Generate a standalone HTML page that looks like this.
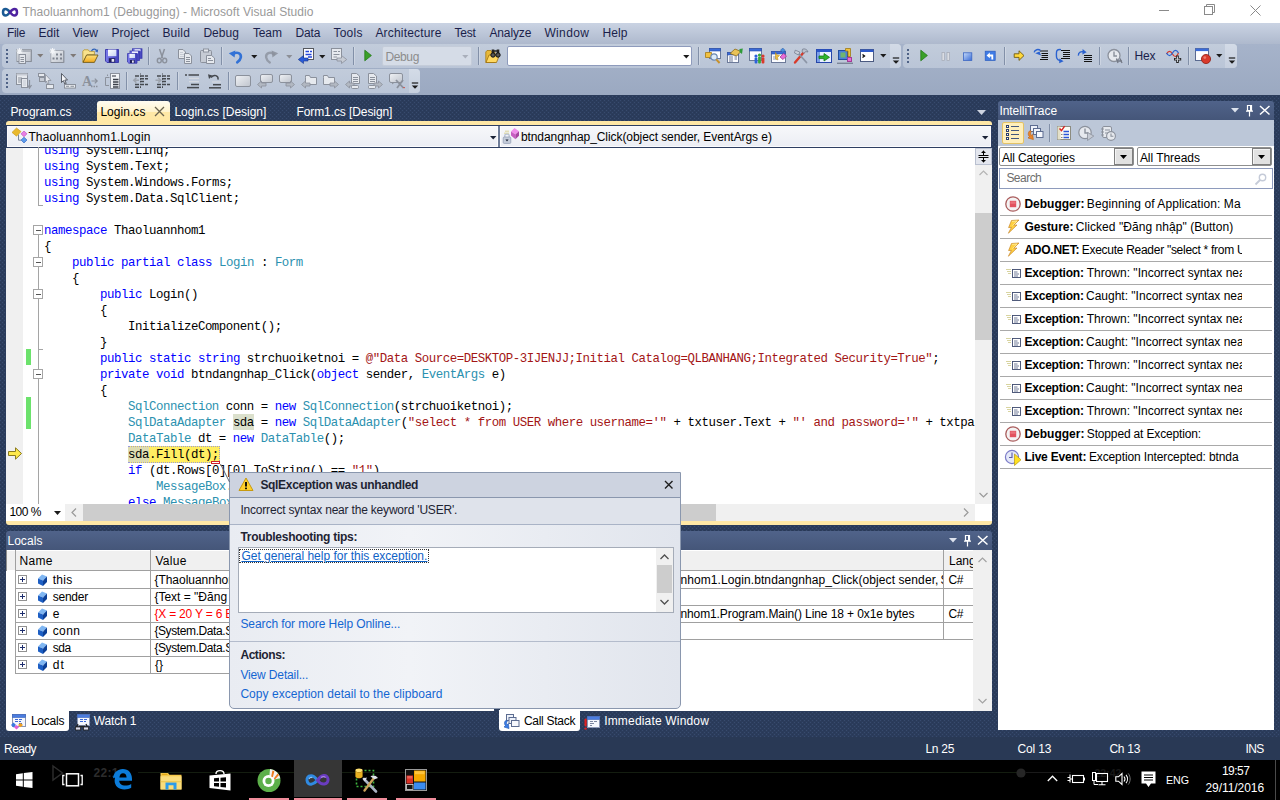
<!DOCTYPE html>
<html><head><meta charset="utf-8"><title>VS</title>
<style>
html,body{margin:0;padding:0;width:1280px;height:800px;overflow:hidden;background:#293955;font-family:"Liberation Sans", sans-serif;font-size:12px}
.t{position:absolute;white-space:pre;display:block}
.r{position:absolute;box-sizing:border-box}
.m{font-family:"Liberation Mono", monospace}
svg{position:absolute;overflow:visible}

.code{position:absolute;left:6px;top:147px;width:969px;height:357px;overflow:hidden;clip-path:inset(1px 0 0 0)}
.cl{position:absolute;left:38px;height:16px;line-height:16px;white-space:pre;font-family:"Liberation Mono",monospace;font-size:12.4px;letter-spacing:-0.441px;color:#000}
.k{color:#0000FF}.ty{color:#2B91AF}.st{color:#A31515}


.dlg{position:absolute;left:229px;top:472px;width:452px;height:237px;box-sizing:border-box;border:1px solid #8A97AE;border-radius:0 0 5px 5px;background:linear-gradient(90deg,#E9ECF2,#F1F3F7 40%,#E1E5ED);overflow:hidden}

</style></head><body>
<svg style="left:0;top:95px" width="1280" height="642"><defs><pattern id="dots" width="4" height="4" patternUnits="userSpaceOnUse"><rect width="4" height="4" fill="#2B3C5B"/><rect x="0" y="1" width="1" height="1" fill="#384B6E"/><rect x="2" y="3" width="1" height="1" fill="#384B6E"/><rect x="2" y="1" width="1" height="1" fill="#283857"/><rect x="0" y="3" width="1" height="1" fill="#283857"/></pattern></defs><rect width="1280" height="642" fill="url(#dots)"/></svg><div class="r" style="left:0px;top:0px;width:1280px;height:23px;background:#fff;"></div><span class="t" style="left:22.4px;top:3.5px;height:16px;line-height:16px;font-size:12px;color:#999;letter-spacing:0.048px;">Thaoluannhom1 (Debugging) - Microsoft Visual Studio</span><div class="r" style="left:0px;top:23px;width:1280px;height:21px;background:linear-gradient(#CAD3E3,#AEB9CD);"></div><span class="t" style="left:6.9px;top:25px;height:16px;line-height:16px;font-size:12px;color:#1B1F4B;letter-spacing:-0.281px;">File</span><span class="t" style="left:38.4px;top:25px;height:16px;line-height:16px;font-size:12px;color:#1B1F4B;letter-spacing:0.104px;">Edit</span><span class="t" style="left:72.4px;top:25px;height:16px;line-height:16px;font-size:12px;color:#1B1F4B;letter-spacing:-0.099px;">View</span><span class="t" style="left:111.4px;top:25px;height:16px;line-height:16px;font-size:12px;color:#1B1F4B;letter-spacing:0.107px;">Project</span><span class="t" style="left:162.4px;top:25px;height:16px;line-height:16px;font-size:12px;color:#1B1F4B;letter-spacing:0.203px;">Build</span><span class="t" style="left:203.4px;top:25px;height:16px;line-height:16px;font-size:12px;color:#1B1F4B;letter-spacing:0.031px;">Debug</span><span class="t" style="left:252.9px;top:25px;height:16px;line-height:16px;font-size:12px;color:#1B1F4B;letter-spacing:-0.115px;">Team</span><span class="t" style="left:295.4px;top:25px;height:16px;line-height:16px;font-size:12px;color:#1B1F4B;letter-spacing:-0.12px;">Data</span><span class="t" style="left:333.4px;top:25px;height:16px;line-height:16px;font-size:12px;color:#1B1F4B;letter-spacing:0.246px;">Tools</span><span class="t" style="left:375.4px;top:25px;height:16px;line-height:16px;font-size:12px;color:#1B1F4B;letter-spacing:0.179px;">Architecture</span><span class="t" style="left:454.4px;top:25px;height:16px;line-height:16px;font-size:12px;color:#1B1F4B;letter-spacing:-0.172px;">Test</span><span class="t" style="left:489.4px;top:25px;height:16px;line-height:16px;font-size:12px;color:#1B1F4B;letter-spacing:-0.117px;">Analyze</span><span class="t" style="left:544.4px;top:25px;height:16px;line-height:16px;font-size:12px;color:#1B1F4B;letter-spacing:0.362px;">Window</span><span class="t" style="left:602.4px;top:25px;height:16px;line-height:16px;font-size:12px;color:#1B1F4B;letter-spacing:0.104px;">Help</span><div class="r" style="left:0px;top:44px;width:1280px;height:51px;background:linear-gradient(#A6B3CA,#9BA9C1);"></div><div class="r" style="left:0px;top:737px;width:1280px;height:23px;background:#293955;"></div><span class="t" style="left:4px;top:740.5px;height:16px;line-height:16px;font-size:12px;color:#fff;letter-spacing:-0.522px;">Ready</span><div class="r" style="left:0px;top:760px;width:1280px;height:40px;background:#000;"></div><span class="t" style="left:10.4px;top:103.5px;height:16px;line-height:16px;font-size:12px;color:#fff;letter-spacing:-0.04px;">Program.cs</span><div class="r" style="left:97px;top:101px;width:73px;height:21px;border-radius:3px 3px 0 0;background:linear-gradient(#FFFCF2,#FFF3CD 50%,#FFE8A6 52%,#FFE8A6)"></div><span class="t" style="left:100.4px;top:103.5px;height:16px;line-height:16px;font-size:12px;color:#000;letter-spacing:0.042px;">Login.cs</span><svg style="left:154px;top:106px" width="11" height="11"><path d="M1 1L10 10M10 1L1 10" stroke="#6b6450" stroke-width="1.3" fill="none"/></svg><span class="t" style="left:174.4px;top:103.5px;height:16px;line-height:16px;font-size:12px;color:#fff;letter-spacing:-0.004px;">Login.cs [Design]</span><span class="t" style="left:296.4px;top:103.5px;height:16px;line-height:16px;font-size:12px;color:#fff;letter-spacing:-0.085px;">Form1.cs [Design]</span><svg style="left:977px;top:110px" width="10" height="6"><path d="M0 0H9L4.5 5Z" fill="#CED4E0"/></svg><div class="r" style="left:6px;top:121px;width:986px;height:403.5px;background:#FFE8A6;border-radius:3px"></div><div class="r" style="left:6px;top:125px;width:986px;height:23px;background:#2E3F62;"></div><div class="r" style="left:7px;top:126px;width:491px;height:21px;background:linear-gradient(#F6F7FA,#ECEEF4);border:1px solid #FBFBFD"></div><div class="r" style="left:498px;top:126px;width:2px;height:21px;background:#6E7C98;"></div><div class="r" style="left:500px;top:126px;width:491px;height:21px;background:linear-gradient(#F6F7FA,#ECEEF4);border:1px solid #FBFBFD"></div><span class="t" style="left:28.4px;top:128.5px;height:16px;line-height:16px;font-size:12px;color:#000;letter-spacing:0.142px;">Thaoluannhom1.Login</span><span class="t" style="left:520.9px;top:128.5px;height:16px;line-height:16px;font-size:12px;color:#000;letter-spacing:-0.072px;">btndangnhap_Click(object sender, EventArgs e)</span><svg style="left:490px;top:136px" width="7" height="4"><path d="M0 0H6.4L3.2 3.6Z" fill="#1A2236"/></svg><svg style="left:982px;top:136px" width="7" height="4"><path d="M0 0H6.4L3.2 3.6Z" fill="#1A2236"/></svg><svg style="left:11px;top:127px" width="18" height="18"><path d="M7.5 7.5V13.2H10" stroke="#7C889C" fill="none"/><path d="M5.5 1L10 4.6L5.5 9.2L1 5.4Z" fill="#E9B92E" stroke="#C4951A" stroke-width=".6"/><path d="M13 4L16 6.8L13 9.8L10 6.8Z" fill="#E87EE4" stroke="#B64FB4" stroke-width=".6"/><path d="M13 10.2L16 13L13 16L10 13Z" fill="#5C9CEC" stroke="#2A5CC0" stroke-width=".6"/></svg><svg style="left:502px;top:127px" width="18" height="18"><path d="M3 4.2H7M2 6.2H7" stroke="#D8D08C" stroke-width=".9"/><path d="M2.8 10V8.4C2.8 6.6 7.2 6.6 7.2 8.4V10" fill="none" stroke="#B8C2D4" stroke-width="1.3"/><rect x="1.2" y="10" width="7.6" height="6.4" rx="1" fill="#C4CCDA" stroke="#8E9AB0" stroke-width=".7"/><path d="M3.4 12.6H6.6L5 14.4Z" fill="#1A2236"/><path d="M12.5 1L17 4.2L13.4 7.4L9 4.4Z" fill="#F08EEA"/><path d="M9 4.4L13.4 7.4V12.2L9 8.6Z" fill="#C85CC2"/><path d="M13.4 7.4L17 4.2V8.8L13.4 12.2Z" fill="#A844A2"/></svg><div class="r" style="left:6px;top:148px;width:969px;height:356px;background:#fff;"></div><div class="r" style="left:6px;top:148px;width:17px;height:356px;background:#F0F0F0;"></div><div class="r" style="left:975px;top:148px;width:17px;height:356px;background:#F0F0F0;"></div><div class="r" style="left:975px;top:148px;width:17px;height:17px;background:#E3E6EE;border:1px solid #B9C0D0"></div><div class="r" style="left:975px;top:213px;width:17px;height:127px;background:#CDCDCD;"></div><div class="r" style="left:6px;top:504px;width:986px;height:17px;background:#F0F0F0;"></div><div class="r" style="left:6px;top:504px;width:59px;height:17px;background:#fff;"></div><span class="t" style="left:9.4px;top:504px;height:16px;line-height:16px;font-size:12px;color:#000;letter-spacing:-0.508px;">100 %</span><svg style="left:54px;top:511px" width="8" height="5"><path d="M0 0H7L3.5 4Z" fill="#1b1b1b"/></svg><div class="r" style="left:83px;top:504px;width:633px;height:17px;background:#CDCDCD;"></div><div class="r" style="left:975px;top:504px;width:17px;height:17px;background:#fff;"></div><div class="code"><div class="r" style="left:20px;top:202px;width:5px;height:16px;background:#6CE26C"></div><div class="r" style="left:20px;top:250px;width:5px;height:32px;background:#6CE26C"></div><div class="r" style="left:227px;top:267px;width:21px;height:16px;background:#DBE0CC"></div><div class="r" style="left:122px;top:299px;width:92px;height:17px;background:#FFEE62;border:1px dotted #9A9AD8"></div><div class="r" style="left:122px;top:300px;width:21px;height:15px;background:#DEDDB2"></div><div class="cl" style="top:-4px"><span class="k">using</span> System.Linq;</div><div class="cl" style="top:12px"><span class="k">using</span> System.Text;</div><div class="cl" style="top:28px"><span class="k">using</span> System.Windows.Forms;</div><div class="cl" style="top:44px"><span class="k">using</span> System.Data.SqlClient;</div><div class="cl" style="top:76px"><span class="k">namespace</span> Thaoluannhom1</div><div class="cl" style="top:92px">{</div><div class="cl" style="top:108px">    <span class="k">public</span> <span class="k">partial</span> <span class="k">class</span> <span class="ty">Login</span> : <span class="ty">Form</span></div><div class="cl" style="top:124px">    {</div><div class="cl" style="top:140px">        <span class="k">public</span> Login()</div><div class="cl" style="top:156px">        {</div><div class="cl" style="top:172px">            InitializeComponent();</div><div class="cl" style="top:188px">        }</div><div class="cl" style="top:204px">        <span class="k">public</span> <span class="k">static</span> <span class="k">string</span> strchuoiketnoi = <span class="st">@&quot;Data Source=DESKTOP-3IJENJJ;Initial Catalog=QLBANHANG;Integrated Security=True&quot;</span>;</div><div class="cl" style="top:220px">        <span class="k">private</span> <span class="k">void</span> btndangnhap_Click(<span class="k">object</span> sender, <span class="ty">EventArgs</span> e)</div><div class="cl" style="top:236px">        {</div><div class="cl" style="top:252px">            <span class="ty">SqlConnection</span> conn = <span class="k">new</span> <span class="ty">SqlConnection</span>(strchuoiketnoi);</div><div class="cl" style="top:268px">            <span class="ty">SqlDataAdapter</span> <span class="ref">sda</span> = <span class="k">new</span> <span class="ty">SqlDataAdapter</span>(<span class="st">&quot;select * from USER where username=&#x27;&quot;</span> + txtuser.Text + <span class="st">&quot;&#x27; and password=&#x27;&quot;</span> + txtpass.Text</div><div class="cl" style="top:284px">            <span class="ty">DataTable</span> dt = <span class="k">new</span> <span class="ty">DataTable</span>();</div><div class="cl" style="top:300px">            <span class="ref2">sda</span><span class="hl">.Fill(dt);</span></div><div class="cl" style="top:316px">            <span class="k">if</span> (dt.Rows[0][0].ToString() == <span class="st">&quot;1&quot;</span>)</div><div class="cl" style="top:332px">                <span class="ty">MessageBox</span>.Show(<span class="st">&quot;Dang nhap thanh cong&quot;</span>);</div><div class="cl" style="top:348px">            <span class="k">else</span> <span class="ty">MessageBox</span>.Show(<span class="st">&quot;Sai&quot;</span>);</div></div><svg style="left:0;top:147px" width="60" height="357" shape-rendering="crispEdges"><path d="M38.5 0V58.5H43" stroke="#A5A5A5" fill="none"/><path d="M38.5 87V357" stroke="#A5A5A5" fill="none"/><path d="M38.5 202.5H43" stroke="#A5A5A5" fill="none"/><rect x="33.5" y="78.5" width="9" height="9" fill="#fff" stroke="#A5A5A5"/><path d="M36 83H41" stroke="#555" fill="none"/><rect x="33.5" y="110.5" width="9" height="9" fill="#fff" stroke="#A5A5A5"/><path d="M36 115H41" stroke="#555" fill="none"/><rect x="33.5" y="142.5" width="9" height="9" fill="#fff" stroke="#A5A5A5"/><path d="M36 147H41" stroke="#555" fill="none"/><rect x="33.5" y="222.5" width="9" height="9" fill="#fff" stroke="#A5A5A5"/><path d="M36 227H41" stroke="#555" fill="none"/></svg><svg style="left:7px;top:446px" width="16" height="15"><path d="M1.5 5.5H8.5V1.8L14.5 7.5L8.5 13.2V9.5H1.5Z" fill="#FFE94A" stroke="#8A7A1E" stroke-width="1"/></svg><svg style="left:211px;top:461px" width="10" height="4"><rect x="0.5" y="0.5" width="8" height="2" fill="#fff" stroke="#D0202A" stroke-width="1"/></svg><div class="r" style="left:998px;top:101px;width:276px;height:19px;background:linear-gradient(#50638A,#455679);border-radius:3px 3px 0 0"></div><span class="t" style="left:999.4px;top:102.5px;height:16px;line-height:16px;font-size:12px;color:#fff;letter-spacing:-0.05px;">IntelliTrace</span><svg style="left:1231px;top:108px" width="9" height="6"><path d="M0 0H8L4 4.5Z" fill="#DDE3EE"/></svg><svg style="left:1245px;top:104px" width="9" height="14"><path d="M2.5 1.5H6.5V6.5H2.5ZM5.6 1.5V6.5M1 7.2H8M4.5 7.2V12.6" stroke="#fff" stroke-width="1.2" fill="none"/></svg><svg style="left:1259px;top:105px" width="12" height="11"><path d="M1 1L10.5 9.5M10.5 1L1 9.5" stroke="#fff" stroke-width="1.5" fill="none"/></svg><div class="r" style="left:998px;top:120px;width:276px;height:26px;background:#BCC7D8;"></div><div class="r" style="left:998px;top:146px;width:276px;height:584px;background:#fff;"></div><div class="r" style="left:999px;top:147px;width:135px;height:19px;background:#fff;border:1px solid #8E8F8F;border-radius:2px"></div><div class="r" style="left:1114px;top:148px;width:19px;height:17px;background:#E1E1E1;border:1px solid #7E7E7E;box-shadow:inset 1px 1px 0 #F4F4F4"></div><svg style="left:1120px;top:155px" width="8" height="5"><path d="M0 0H7L3.5 4Z" fill="#000"/></svg><span class="t" style="left:1001.9px;top:150px;height:16px;line-height:16px;font-size:12px;color:#000;letter-spacing:-0.131px;">All Categories</span><div class="r" style="left:1137px;top:147px;width:135px;height:19px;background:#fff;border:1px solid #8E8F8F;border-radius:2px"></div><div class="r" style="left:1252px;top:148px;width:19px;height:17px;background:#E1E1E1;border:1px solid #7E7E7E;box-shadow:inset 1px 1px 0 #F4F4F4"></div><svg style="left:1258px;top:155px" width="8" height="5"><path d="M0 0H7L3.5 4Z" fill="#000"/></svg><span class="t" style="left:1139.9px;top:150px;height:16px;line-height:16px;font-size:12px;color:#000;letter-spacing:-0.048px;">All Threads</span><div class="r" style="left:999px;top:168px;width:274px;height:21px;background:#fff;border:1px solid #8E9BBC"></div><span class="t" style="left:1006.4px;top:169.7px;height:16px;line-height:16px;font-size:12px;color:#6d6d6d;letter-spacing:-0.526px;">Search</span><svg style="left:1254px;top:172px" width="14" height="14"><circle cx="8.5" cy="5.5" r="3.2" fill="none" stroke="#C5CBD8" stroke-width="1.4"/><path d="M6 8L1.5 12.5" stroke="#C5CBD8" stroke-width="1.8"/></svg><div class="r" style="left:998px;top:190px;width:244px;height:290px;overflow:hidden"><span class="t" style="left:26.4px;top:6px;height:16px;line-height:16px;font-size:12px;color:#000;font-weight:700;letter-spacing:0px;">Debugger:</span><span class="t" style="left:88.8px;top:6px;height:16px;line-height:16px;font-size:12px;color:#000;letter-spacing:0.088px;">Beginning of Application: Ma</span><span class="t" style="left:26.4px;top:29px;height:16px;line-height:16px;font-size:12px;color:#000;font-weight:700;letter-spacing:-0.051px;">Gesture:</span><span class="t" style="left:77.8px;top:29px;height:16px;line-height:16px;font-size:12px;color:#000;letter-spacing:0.054px;">Clicked &quot;Đăng nhập&quot; (Button)</span><span class="t" style="left:26.4px;top:52px;height:16px;line-height:16px;font-size:12px;color:#000;font-weight:700;letter-spacing:-0.239px;">ADO.NET:</span><span class="t" style="left:83.7px;top:52px;height:16px;line-height:16px;font-size:12px;color:#000;letter-spacing:-0.278px;">Execute Reader &quot;select * from U</span><span class="t" style="left:26.4px;top:75px;height:16px;line-height:16px;font-size:12px;color:#000;font-weight:700;letter-spacing:-0.205px;">Exception:</span><span class="t" style="left:88.7px;top:75px;height:16px;line-height:16px;font-size:12px;color:#000;letter-spacing:0px;">Thrown: &quot;Incorrect syntax nea</span><span class="t" style="left:26.4px;top:98px;height:16px;line-height:16px;font-size:12px;color:#000;font-weight:700;letter-spacing:-0.205px;">Exception:</span><span class="t" style="left:88px;top:98px;height:16px;line-height:16px;font-size:12px;color:#000;letter-spacing:0px;">Caught: &quot;Incorrect syntax nea</span><span class="t" style="left:26.4px;top:121px;height:16px;line-height:16px;font-size:12px;color:#000;font-weight:700;letter-spacing:-0.205px;">Exception:</span><span class="t" style="left:88.7px;top:121px;height:16px;line-height:16px;font-size:12px;color:#000;letter-spacing:0px;">Thrown: &quot;Incorrect syntax nea</span><span class="t" style="left:26.4px;top:144px;height:16px;line-height:16px;font-size:12px;color:#000;font-weight:700;letter-spacing:-0.205px;">Exception:</span><span class="t" style="left:88px;top:144px;height:16px;line-height:16px;font-size:12px;color:#000;letter-spacing:0px;">Caught: &quot;Incorrect syntax nea</span><span class="t" style="left:26.4px;top:167px;height:16px;line-height:16px;font-size:12px;color:#000;font-weight:700;letter-spacing:-0.205px;">Exception:</span><span class="t" style="left:88.7px;top:167px;height:16px;line-height:16px;font-size:12px;color:#000;letter-spacing:0px;">Thrown: &quot;Incorrect syntax nea</span><span class="t" style="left:26.4px;top:190px;height:16px;line-height:16px;font-size:12px;color:#000;font-weight:700;letter-spacing:-0.205px;">Exception:</span><span class="t" style="left:88px;top:190px;height:16px;line-height:16px;font-size:12px;color:#000;letter-spacing:0px;">Caught: &quot;Incorrect syntax nea</span><span class="t" style="left:26.4px;top:213px;height:16px;line-height:16px;font-size:12px;color:#000;font-weight:700;letter-spacing:-0.205px;">Exception:</span><span class="t" style="left:88.7px;top:213px;height:16px;line-height:16px;font-size:12px;color:#000;letter-spacing:0px;">Thrown: &quot;Incorrect syntax nea</span><span class="t" style="left:26.4px;top:236px;height:16px;line-height:16px;font-size:12px;color:#000;font-weight:700;letter-spacing:0px;">Debugger:</span><span class="t" style="left:88.8px;top:236px;height:16px;line-height:16px;font-size:12px;color:#000;letter-spacing:-0.156px;">Stopped at Exception:</span><span class="t" style="left:26.4px;top:259px;height:16px;line-height:16px;font-size:12px;color:#000;font-weight:700;letter-spacing:-0.203px;">Live Event:</span><span class="t" style="left:90.9px;top:259px;height:16px;line-height:16px;font-size:12px;color:#000;letter-spacing:-0.114px;">Exception Intercepted: btnda</span></div><div class="r" style="left:1000px;top:215px;width:272px;height:1px;background:#A9A9A9;"></div><div class="r" style="left:1000px;top:238px;width:272px;height:1px;background:#A9A9A9;"></div><div class="r" style="left:1000px;top:261px;width:272px;height:1px;background:#A9A9A9;"></div><div class="r" style="left:1000px;top:284px;width:272px;height:1px;background:#A9A9A9;"></div><div class="r" style="left:1000px;top:307px;width:272px;height:1px;background:#A9A9A9;"></div><div class="r" style="left:1000px;top:330px;width:272px;height:1px;background:#A9A9A9;"></div><div class="r" style="left:1000px;top:353px;width:272px;height:1px;background:#A9A9A9;"></div><div class="r" style="left:1000px;top:376px;width:272px;height:1px;background:#A9A9A9;"></div><div class="r" style="left:1000px;top:399px;width:272px;height:1px;background:#A9A9A9;"></div><div class="r" style="left:1000px;top:422px;width:272px;height:1px;background:#A9A9A9;"></div><div class="r" style="left:1000px;top:445px;width:272px;height:1px;background:#A9A9A9;"></div><div class="r" style="left:1000px;top:468px;width:272px;height:1px;background:#A9A9A9;"></div><div class="r" style="left:6px;top:531px;width:488px;height:19px;background:linear-gradient(#50638A,#455679);border-radius:3px 3px 0 0"></div><span class="t" style="left:7.4px;top:532.5px;height:16px;line-height:16px;font-size:12px;color:#fff;letter-spacing:0.062px;">Locals</span><div class="r" style="left:6px;top:550px;width:488px;height:161px;background:#fff;"></div><div class="r" style="left:6px;top:551px;width:488px;height:19px;background:#F0F0F0;"></div><div class="r" style="left:6px;top:550px;width:1px;height:21px;background:#8E8E8E;"></div><span class="t" style="left:19.4px;top:552.5px;height:16px;line-height:16px;font-size:12px;color:#000;letter-spacing:0.328px;">Name</span><span class="t" style="left:155.4px;top:552.5px;height:16px;line-height:16px;font-size:12px;color:#000;letter-spacing:0.297px;">Value</span><div class="r" style="left:15px;top:570px;width:479px;height:1px;background:#A0A0A0;"></div><div class="r" style="left:15px;top:588px;width:479px;height:1px;background:#A0A0A0;"></div><div class="r" style="left:15px;top:605px;width:479px;height:1px;background:#A0A0A0;"></div><div class="r" style="left:15px;top:622px;width:479px;height:1px;background:#A0A0A0;"></div><div class="r" style="left:15px;top:639px;width:479px;height:1px;background:#A0A0A0;"></div><div class="r" style="left:15px;top:656px;width:479px;height:1px;background:#A0A0A0;"></div><div class="r" style="left:15px;top:673px;width:479px;height:1px;background:#A0A0A0;"></div><div class="r" style="left:15px;top:550px;width:1px;height:124px;background:#A0A0A0;"></div><div class="r" style="left:150px;top:550px;width:1px;height:124px;background:#A0A0A0;"></div><svg style="left:18px;top:574.5px" width="9" height="9" shape-rendering="crispEdges"><rect x="0.5" y="0.5" width="8" height="8" fill="#fff" stroke="#919191"/><path d="M2 4.5H7M4.5 2V7" stroke="#1E2E6E" fill="none"/></svg><svg style="left:37px;top:573.5px" width="11" height="13"><path d="M5 0.5L10 2.5L6 6.5L1 4.5Z" fill="#7FB6F2"/><path d="M1 4.5L6 6.5V12L1 9.5Z" fill="#1D5FC4"/><path d="M6 6.5L10 2.5V8L6 12Z" fill="#0B3F96"/></svg><span class="t" style="left:52.7px;top:571.5px;height:16px;line-height:16px;font-size:12px;color:#000;letter-spacing:0.304px;">this</span><span class="t" style="left:154.4px;top:571.5px;height:16px;line-height:16px;font-size:12px;color:#000;letter-spacing:-0.019px;">{Thaoluannhom1.Login, Text: Đăng nhập}</span><svg style="left:18px;top:591.5px" width="9" height="9" shape-rendering="crispEdges"><rect x="0.5" y="0.5" width="8" height="8" fill="#fff" stroke="#919191"/><path d="M2 4.5H7M4.5 2V7" stroke="#1E2E6E" fill="none"/></svg><svg style="left:37px;top:590.5px" width="11" height="13"><path d="M5 0.5L10 2.5L6 6.5L1 4.5Z" fill="#7FB6F2"/><path d="M1 4.5L6 6.5V12L1 9.5Z" fill="#1D5FC4"/><path d="M6 6.5L10 2.5V8L6 12Z" fill="#0B3F96"/></svg><span class="t" style="left:52.7px;top:588.5px;height:16px;line-height:16px;font-size:12px;color:#000;letter-spacing:-0.221px;">sender</span><span class="t" style="left:154.4px;top:588.5px;height:16px;line-height:16px;font-size:12px;color:#000;letter-spacing:0.003px;">{Text = &quot;Đăng nhập&quot;}</span><svg style="left:18px;top:608.5px" width="9" height="9" shape-rendering="crispEdges"><rect x="0.5" y="0.5" width="8" height="8" fill="#fff" stroke="#919191"/><path d="M2 4.5H7M4.5 2V7" stroke="#1E2E6E" fill="none"/></svg><svg style="left:37px;top:607.5px" width="11" height="13"><path d="M5 0.5L10 2.5L6 6.5L1 4.5Z" fill="#7FB6F2"/><path d="M1 4.5L6 6.5V12L1 9.5Z" fill="#1D5FC4"/><path d="M6 6.5L10 2.5V8L6 12Z" fill="#0B3F96"/></svg><span class="t" style="left:52.7px;top:605.5px;height:16px;line-height:16px;font-size:12px;color:#000;letter-spacing:0px;">e</span><span class="t" style="left:154.4px;top:605.5px;height:16px;line-height:16px;font-size:12px;color:#FF0000;letter-spacing:-0.193px;">{X = 20 Y = 6 Button = Left}</span><svg style="left:18px;top:625.5px" width="9" height="9" shape-rendering="crispEdges"><rect x="0.5" y="0.5" width="8" height="8" fill="#fff" stroke="#919191"/><path d="M2 4.5H7M4.5 2V7" stroke="#1E2E6E" fill="none"/></svg><svg style="left:37px;top:624.5px" width="11" height="13"><path d="M5 0.5L10 2.5L6 6.5L1 4.5Z" fill="#7FB6F2"/><path d="M1 4.5L6 6.5V12L1 9.5Z" fill="#1D5FC4"/><path d="M6 6.5L10 2.5V8L6 12Z" fill="#0B3F96"/></svg><span class="t" style="left:52.7px;top:622.5px;height:16px;line-height:16px;font-size:12px;color:#000;letter-spacing:0.39px;">conn</span><span class="t" style="left:154.4px;top:622.5px;height:16px;line-height:16px;font-size:12px;color:#000;letter-spacing:-0.396px;">{System.Data.SqlClient.SqlConnection}</span><svg style="left:18px;top:642.5px" width="9" height="9" shape-rendering="crispEdges"><rect x="0.5" y="0.5" width="8" height="8" fill="#fff" stroke="#919191"/><path d="M2 4.5H7M4.5 2V7" stroke="#1E2E6E" fill="none"/></svg><svg style="left:37px;top:641.5px" width="11" height="13"><path d="M5 0.5L10 2.5L6 6.5L1 4.5Z" fill="#7FB6F2"/><path d="M1 4.5L6 6.5V12L1 9.5Z" fill="#1D5FC4"/><path d="M6 6.5L10 2.5V8L6 12Z" fill="#0B3F96"/></svg><span class="t" style="left:52.7px;top:639.5px;height:16px;line-height:16px;font-size:12px;color:#000;letter-spacing:-0.38px;">sda</span><span class="t" style="left:154.4px;top:639.5px;height:16px;line-height:16px;font-size:12px;color:#000;letter-spacing:-0.398px;">{System.Data.SqlClient.SqlDataAdapter}</span><svg style="left:18px;top:659.5px" width="9" height="9" shape-rendering="crispEdges"><rect x="0.5" y="0.5" width="8" height="8" fill="#fff" stroke="#919191"/><path d="M2 4.5H7M4.5 2V7" stroke="#1E2E6E" fill="none"/></svg><svg style="left:37px;top:658.5px" width="11" height="13"><path d="M5 0.5L10 2.5L6 6.5L1 4.5Z" fill="#7FB6F2"/><path d="M1 4.5L6 6.5V12L1 9.5Z" fill="#1D5FC4"/><path d="M6 6.5L10 2.5V8L6 12Z" fill="#0B3F96"/></svg><span class="t" style="left:52.7px;top:656.5px;height:16px;line-height:16px;font-size:12px;color:#000;letter-spacing:1.184px;">dt</span><span class="t" style="left:155px;top:656.5px;height:16px;line-height:16px;font-size:12px;color:#000;letter-spacing:0px;">{}</span><div class="r" style="left:500px;top:531px;width:492px;height:19px;background:linear-gradient(#50638A,#455679);border-radius:3px 3px 0 0"></div><span class="t" style="left:501.4px;top:532.5px;height:16px;line-height:16px;font-size:12px;color:#fff;letter-spacing:0.108px;">Call Stack</span><svg style="left:949px;top:538px" width="9" height="6"><path d="M0 0H8L4 4.5Z" fill="#DDE3EE"/></svg><svg style="left:963px;top:534px" width="9" height="14"><path d="M2.5 1.5H6.5V6.5H2.5ZM5.6 1.5V6.5M1 7.2H8M4.5 7.2V12.6" stroke="#fff" stroke-width="1.2" fill="none"/></svg><svg style="left:977px;top:535px" width="12" height="11"><path d="M1 1L10.5 9.5M10.5 1L1 9.5" stroke="#fff" stroke-width="1.5" fill="none"/></svg><div class="r" style="left:500px;top:550px;width:492px;height:161px;background:#fff;"></div><div class="r" style="left:500px;top:551px;width:473px;height:19px;background:#F0F0F0;"></div><div class="r" style="left:973px;top:550px;width:19px;height:161px;background:#F0F0F0;"></div><div class="r" style="left:500px;top:570px;width:473px;height:1px;background:#A0A0A0;"></div><div class="r" style="left:500px;top:588px;width:473px;height:1px;background:#A0A0A0;"></div><div class="r" style="left:500px;top:605px;width:473px;height:1px;background:#A0A0A0;"></div><div class="r" style="left:500px;top:622px;width:473px;height:1px;background:#A0A0A0;"></div><div class="r" style="left:500px;top:639px;width:473px;height:1px;background:#A0A0A0;"></div><div class="r" style="left:943px;top:550px;width:1px;height:90px;background:#A0A0A0;"></div><span class="t" style="left:949px;top:552.5px;height:16px;line-height:16px;font-size:12px;color:#000;letter-spacing:0px;">Lang</span><div class="r" style="left:973px;top:550px;width:19px;height:22px;background:#F0F0F0;"></div><div class="r" style="left:500px;top:571px;width:443px;height:60px;overflow:hidden"><span class="t" style="left:180.4px;top:0.5px;height:16px;line-height:16px;font-size:12px;color:#000;letter-spacing:0.089px;">nhom1.Login.btndangnhap_Click(object sender,</span><span class="t" style="left:440.6px;top:0.5px;height:16px;line-height:16px;font-size:12px;color:#000;letter-spacing:0px;">System.EventArgs e) Line 25</span><span class="t" style="left:180.4px;top:34.5px;height:16px;line-height:16px;font-size:12px;color:#000;letter-spacing:-0.095px;">nhom1.Program.Main() Line 18 + 0x1e bytes</span></div><span class="t" style="left:948.4px;top:571.5px;height:16px;line-height:16px;font-size:12px;color:#000;letter-spacing:-0.344px;">C#</span><span class="t" style="left:948.4px;top:605.5px;height:16px;line-height:16px;font-size:12px;color:#000;letter-spacing:-0.344px;">C#</span><svg style="left:978px;top:557px" width="9" height="6"><path d="M0.5 5L4.5 1L8.5 5" stroke="#A3A3A3" stroke-width="1.2" fill="none"/></svg><svg style="left:978px;top:698px" width="9" height="6"><path d="M0.5 1L4.5 5L8.5 1" stroke="#A3A3A3" stroke-width="1.2" fill="none"/></svg><div class="r" style="left:6px;top:710px;width:63px;height:21px;background:#fff;border-radius:0 0 3px 3px"></div><span class="t" style="left:30.9px;top:713.4px;height:16px;line-height:16px;font-size:12px;color:#000;letter-spacing:-0.237px;">Locals</span><span class="t" style="left:93.8px;top:713.4px;height:16px;line-height:16px;font-size:12px;color:#fff;letter-spacing:-0.163px;">Watch 1</span><div class="r" style="left:499px;top:710px;width:81px;height:21px;background:#fff;border-radius:0 0 3px 3px"></div><span class="t" style="left:523.9px;top:713.4px;height:16px;line-height:16px;font-size:12px;color:#000;letter-spacing:-0.281px;">Call Stack</span><span class="t" style="left:604.2px;top:713.4px;height:16px;line-height:16px;font-size:12px;color:#fff;letter-spacing:0.177px;">Immediate Window</span><span class="t" style="left:925.4px;top:740.5px;height:16px;line-height:16px;font-size:12px;color:#fff;letter-spacing:-0.258px;">Ln 25</span><span class="t" style="left:1017.4px;top:740.5px;height:16px;line-height:16px;font-size:12px;color:#fff;letter-spacing:-0.138px;">Col 13</span><span class="t" style="left:1109.4px;top:740.5px;height:16px;line-height:16px;font-size:12px;color:#fff;letter-spacing:-0.258px;">Ch 13</span><span class="t" style="left:1245.4px;top:740.5px;height:16px;line-height:16px;font-size:12px;color:#fff;letter-spacing:-0.508px;">INS</span><div class="dlg"><div class="r" style="left:0px;top:0px;width:450px;height:24px;background:#CDD3E0;"></div><div class="r" style="left:0px;top:24px;width:450px;height:1px;background:#8A97AE;"></div><div class="r" style="left:0px;top:25px;width:450px;height:26px;background:#DFE3EB;"></div><div class="r" style="left:0px;top:51px;width:450px;height:1px;background:#A9B3C6;"></div><div class="r" style="left:0px;top:168px;width:450px;height:1px;background:#B4BCCC;"></div><div class="r" style="left:8px;top:74px;width:436px;height:66px;background:#fff;border:1px solid #A5ACB8"></div><div class="r" style="left:426px;top:75px;width:17px;height:64px;background:#F0F0F0;"></div><div class="r" style="left:427px;top:92px;width:15px;height:28px;background:#CDCDCD;"></div><svg style="left:430px;top:81px" width="9" height="6"><path d="M0.5 5L4.5 1L8.5 5" stroke="#505050" stroke-width="1.3" fill="none"/></svg><svg style="left:430px;top:126px" width="9" height="6"><path d="M0.5 1L4.5 5L8.5 1" stroke="#505050" stroke-width="1.3" fill="none"/></svg></div><span class="t" style="left:260.4px;top:476.5px;height:16px;line-height:16px;font-size:12px;color:#1E2433;font-weight:700;letter-spacing:-0.321px;">SqlException was unhandled</span><span class="t" style="left:240.4px;top:501.5px;height:16px;line-height:16px;font-size:12px;color:#1E2433;letter-spacing:-0.192px;">Incorrect syntax near the keyword &#x27;USER&#x27;.</span><span class="t" style="left:240.4px;top:528.5px;height:16px;line-height:16px;font-size:12px;color:#1E2433;font-weight:700;letter-spacing:-0.283px;">Troubleshooting tips:</span><span class="t" style="left:241.4px;top:547.5px;height:16px;line-height:16px;font-size:12px;color:#0E62C6;letter-spacing:-0.004px;text-decoration:underline">Get general help for this exception.</span><div class="r" style="left:239px;top:549px;width:190px;height:14px;background:transparent;border:1px dotted #333"></div><span class="t" style="left:240.4px;top:615.5px;height:16px;line-height:16px;font-size:12px;color:#1466D2;letter-spacing:-0.072px;">Search for more Help Online...</span><span class="t" style="left:240.4px;top:646.5px;height:16px;line-height:16px;font-size:12px;color:#1E2433;font-weight:700;letter-spacing:-0.429px;">Actions:</span><span class="t" style="left:240.4px;top:666.5px;height:16px;line-height:16px;font-size:12px;color:#1466D2;letter-spacing:-0.139px;">View Detail...</span><span class="t" style="left:240.4px;top:685.5px;height:16px;line-height:16px;font-size:12px;color:#1466D2;letter-spacing:0.05px;">Copy exception detail to the clipboard</span><svg style="left:664px;top:480px" width="10" height="10"><path d="M1 1L8.5 8.5M8.5 1L1 8.5" stroke="#1E1E1E" stroke-width="1.4" fill="none"/></svg><svg style="left:238px;top:477px" width="16" height="15"><path d="M8 1L15 13.5H1Z" fill="#FFD02A" stroke="#C79A10" stroke-width="1" stroke-linejoin="round"/><path d="M8 5V9.5" stroke="#000" stroke-width="1.8"/><rect x="7.1" y="10.6" width="1.8" height="1.6" fill="#000"/></svg><svg style="left:218px;top:462px" width="14" height="22"><path d="M2.5 2L11.5 20" stroke="#5A6478" stroke-width="1" fill="none"/></svg><svg width="0" height="0" style="left:0;top:0"><defs><linearGradient id="gG" x1="0" y1="0" x2="1" y2="1"><stop offset="0" stop-color="#F0F2F5"/><stop offset="1" stop-color="#BFC4CD"/></linearGradient><linearGradient id="gF" x1="0" y1="0" x2="0" y2="1"><stop offset="0" stop-color="#FFE27A"/><stop offset="1" stop-color="#F0A81E"/></linearGradient><linearGradient id="gB" x1="0" y1="0" x2="1" y2="0"><stop offset="0" stop-color="#7C7CEA"/><stop offset="1" stop-color="#4242BC"/></linearGradient><linearGradient id="gS" x1="0" y1="0" x2="1" y2="1"><stop offset="0" stop-color="#C8DCFA"/><stop offset="1" stop-color="#3A6CD6"/></linearGradient><linearGradient id="gW" x1="0" y1="0" x2="1" y2="1"><stop offset="0" stop-color="#FFFFFF"/><stop offset="1" stop-color="#C8D4F4"/></linearGradient></defs></svg><div class="r" style="left:2px;top:44px;width:899px;height:24px;border-radius:4px;background:linear-gradient(#C2CCDB,#BAC5D7)"></div><div class="r" style="left:890px;top:44px;width:11px;height:24px;border-radius:0 4px 4px 0;background:linear-gradient(#D3DBE7,#C6CFDE)"></div><div class="r" style="left:6px;top:49px;width:2px;height:2px;background:#4F6286;"></div><div class="r" style="left:6px;top:53px;width:2px;height:2px;background:#4F6286;"></div><div class="r" style="left:6px;top:57px;width:2px;height:2px;background:#4F6286;"></div><div class="r" style="left:6px;top:61px;width:2px;height:2px;background:#4F6286;"></div><svg style="left:16px;top:48px" width="16" height="16"><rect x="0.8" y="1.5" width="14.5" height="12" fill="url(#gG)" stroke="#9AA0AA"/><rect x="1.3" y="2" width="13.5" height="2" fill="#AEB3BC"/><path d="M15.3 2V13.5H1" stroke="#888E99" fill="none"/><rect x="3" y="6.5" width="6.5" height="9" fill="#E4E7EC" stroke="#8A909B"/><path d="M4.5 9.5H8M4.5 11.5H8M4.5 13.5H8" stroke="#8A909B"/><path d="M3.5 0V6M0.5 3H6.5M1.3 0.8L5.7 5.2M5.7 0.8L1.3 5.2" stroke="#F3F5F8" stroke-width="1.1"/></svg><svg style="left:49px;top:48px" width="16" height="16"><rect x="1.8" y="2.5" width="13" height="12" fill="url(#gG)" stroke="#A6ABB5"/><path d="M14.8 3V14.5H2" stroke="#888E99" fill="none"/><path d="M7 6.5H9M11 6.5H13M3.5 10.5H5.5M7 10.5H9M11 10.5H13" stroke="#7E848F" stroke-width="2"/><path d="M3.5 0V6M0.5 3H6.5M1.3 0.8L5.7 5.2M5.7 0.8L1.3 5.2" stroke="#F3F5F8" stroke-width="1.1"/></svg><svg style="left:82px;top:48px" width="16" height="16"><path d="M0.8 14.2V3.2L2 1.8H6.2L7.4 3.4H12.4V6.8H5L0.8 14.2Z" fill="#F8E28C" stroke="#B8962E" stroke-width=".8"/><path d="M1 14.4L4.6 7H16L12.4 14.4Z" fill="url(#gF)" stroke="#6E5A1E" stroke-width=".9"/><path d="M9.5 3C10.6 0.6 13.6 0.6 14.8 2.6" fill="none" stroke="#2F62B8" stroke-width="1.1"/><path d="M16.2 1.2L15.6 4.6L12.8 3Z" fill="#2F62B8"/></svg><svg style="left:104px;top:48px" width="16" height="16"><path d="M1.5 1.5H14.5V14.5H3L1.5 13Z" fill="url(#gB)" stroke="#3636A8" stroke-width=".9"/><rect x="4" y="1.6" width="8.4" height="6.6" fill="url(#gW)"/><rect x="4.8" y="10.2" width="6.4" height="4.2" fill="#20205A"/><rect x="7.6" y="11" width="2.6" height="2.8" fill="#E8E8F4"/></svg><svg style="left:127px;top:48px" width="16" height="16"><rect x="5.5" y="0.8" width="9.5" height="9.5" fill="url(#gB)" stroke="#3A3AAC" stroke-width=".8"/><rect x="7.5" y="1.2" width="6" height="2" fill="#EEF0FF"/><rect x="3" y="3" width="9.5" height="9.5" fill="url(#gB)" stroke="#3A3AAC" stroke-width=".8"/><rect x="5" y="3.4" width="6" height="2" fill="#EEF0FF"/><path d="M0.5 5.5H10V15.2H1.8L0.5 14Z" fill="url(#gB)" stroke="#3A3AAC" stroke-width=".8"/><rect x="2.4" y="5.8" width="5.6" height="4.2" fill="url(#gW)"/><rect x="3" y="12" width="4.6" height="3" fill="#20205A"/><rect x="5" y="12.5" width="1.8" height="2.2" fill="#E8E8F4"/></svg><svg style="left:154px;top:48px" width="16" height="16"><path d="M5.5 1L8.6 10M10.5 1L7.4 10" stroke="#8B919C" stroke-width="1.5" fill="none"/><ellipse cx="5.3" cy="12.6" rx="2" ry="2.3" fill="none" stroke="#8B919C" stroke-width="1.4"/><ellipse cx="10.7" cy="12.6" rx="2" ry="2.3" fill="none" stroke="#8B919C" stroke-width="1.4"/></svg><svg style="left:177px;top:48px" width="16" height="16"><path d="M1.5 1.5H6L8.5 4V10.5H1.5Z" fill="#E6E9EE" stroke="#8B919C"/><path d="M3 4.5H6M3 6.5H7M3 8.5H7" stroke="#C6CBD4"/><path d="M7.5 5.5H12L14.5 8V15.5H7.5Z" fill="#E6E9EE" stroke="#8B919C"/><path d="M9 9.5H13M9 11.5H13M9 13.5H13" stroke="#8B919C"/></svg><svg style="left:199px;top:48px" width="16" height="16"><rect x="1.5" y="2.5" width="11" height="12" rx="1" fill="#C6CBD4" stroke="#8B919C"/><rect x="4.5" y="1" width="5" height="3" fill="#E6E9EE" stroke="#8B919C"/><path d="M7.5 7.5H12.5L15.5 10V15.5H7.5Z" fill="#E6E9EE" stroke="#8B919C"/><path d="M9 10.5H12M9 12.5H14" stroke="#8B919C"/></svg><svg style="left:228px;top:48px" width="16" height="16"><path d="M5 6.2C9 3.2 13.6 5.2 12.8 9.6C12.4 11.8 10.8 13.4 9.2 14.4" fill="none" stroke="#3272D6" stroke-width="2.6" stroke-linecap="round"/><path d="M0.8 5.2L7.4 2.4L6.6 9.6Z" fill="#3272D6"/></svg><svg style="left:263px;top:48px" width="16" height="16"><path d="M11 6.2C7 3.2 2.4 5.2 3.2 9.6C3.6 11.8 5.2 13.4 6.8 14.4" fill="none" stroke="#8B919C" stroke-width="2.4" stroke-linecap="round" opacity=".8"/><path d="M15.2 5.2L8.6 2.4L9.4 9.6Z" fill="#8B919C" opacity=".85"/></svg><svg style="left:298px;top:48px" width="16" height="16"><rect x="5.5" y="0.5" width="10" height="11" fill="#FCFCFF" stroke="#55585E"/><path d="M7.5 3.5H11M12 3.5H14M7.5 6.5H13.5M10 9H14" stroke="#2346D8" stroke-width="1.3"/><path d="M0.3 11.5L5.5 7.5V10H10V13H5.5V15.5Z" fill="#2A5BD8" stroke="#17388E" stroke-width=".6"/></svg><svg style="left:331px;top:48px" width="16" height="16"><rect x="0.5" y="0.5" width="10" height="11" fill="#E6E9EE" stroke="#8B919C"/><path d="M2.5 3.5H6M7 3.5H9M2.5 6.5H8.5M2.5 9H6" stroke="#8B919C" stroke-width="1.1"/><path d="M15.7 11.5L10.5 7.5V10H6V13H10.5V15.5Z" fill="#C6CBD4" stroke="#8B919C" stroke-width=".8"/></svg><svg style="left:360px;top:48px" width="16" height="16"><path d="M4.8 2.2L11.4 7.5L4.8 12.8Z" fill="#3AA028" stroke="#237A16" stroke-width=".8"/></svg><svg style="left:485px;top:48px" width="16" height="16"><path d="M0.8 14.5V4L2 2.5H6L7 4H10V14.5Z" fill="#E8B93A" stroke="#A67A12" stroke-width=".8"/><path d="M1 14.5L4 7H14.5L11.5 14.5Z" fill="#FFD861" stroke="#9C6F0C" stroke-width=".8"/><path d="M8 1.5V6M13 1.5V6" stroke="#222" stroke-width="2.6"/><circle cx="8" cy="7" r="2.2" fill="#555" stroke="#111"/><circle cx="13" cy="7" r="2.2" fill="#555" stroke="#111"/><path d="M9 3H12" stroke="#222" stroke-width="1.5"/></svg><svg style="left:705px;top:48px" width="16" height="16"><rect x="4.5" y="0.5" width="11" height="10" fill="#FBFCFF" stroke="#6C7A99"/><rect x="4.5" y="0.5" width="11" height="2.5" fill="#3A6BD8" stroke="#2A4FA8" stroke-width=".6"/><path d="M0.5 4.5H6.5V9.5H0.5Z" fill="#F0C040" stroke="#A67A12" stroke-width=".8"/><circle cx="9" cy="9" r="3.2" fill="#DCEBFA" stroke="#6C88B0" stroke-width="1.2"/><path d="M11.2 11.4L14.6 15" stroke="#C8912A" stroke-width="2"/></svg><svg style="left:727px;top:48px" width="16" height="16"><rect x="0.5" y="4.5" width="11" height="10" fill="#FBFCFF" stroke="#6C7A99"/><rect x="0.5" y="4.5" width="11" height="2.5" fill="#3A6BD8" stroke="#2A4FA8" stroke-width=".6"/><path d="M2 9H6M2 11H6M2 13H6M7.5 9H10M7.5 11H10" stroke="#6C7A99"/><path d="M3 5.5L8 1L14 3.5L9.5 8Z" fill="#E9C257" stroke="#8C6B1B" stroke-width=".8"/><path d="M12.5 1L15.8 0.5L15 6L12.5 4Z" fill="#2E9B3A"/></svg><svg style="left:749px;top:48px" width="16" height="16"><rect x="0.5" y="0.5" width="12" height="12" fill="#FBFCFF" stroke="#6C7A99"/><rect x="0.5" y="0.5" width="12" height="2.5" fill="#3A6BD8" stroke="#2A4FA8" stroke-width=".6"/><circle cx="7" cy="8" r="1.6" fill="#2B62D9"/><rect x="5.6" y="9.6" width="2.8" height="6" rx="1" fill="#2B62D9"/><circle cx="10.5" cy="7" r="1.6" fill="#37A83A"/><rect x="9.1" y="8.6" width="2.8" height="7" rx="1" fill="#37A83A"/><circle cx="14" cy="8" r="1.6" fill="#D93B2B"/><rect x="12.6" y="9.6" width="2.8" height="6" rx="1" fill="#D93B2B"/></svg><svg style="left:771px;top:48px" width="16" height="16"><rect x="0.5" y="3.5" width="14" height="11" fill="#FBFCFF" stroke="#6C7A99"/><rect x="0.5" y="3.5" width="14" height="2.5" fill="#3A6BD8" stroke="#2A4FA8" stroke-width=".6"/><path d="M2 9H6M2 11H6" stroke="#8E99B2"/><path d="M5.5 6.5L7 9L9.5 9.5L7.5 11.5L8 14L5.5 12.8Z" fill="#F0C040" stroke="#B58A14" stroke-width=".5" transform="translate(-1,-2)"/><path d="M9 9L12.5 5.5L15.5 8L12 11.5Z" fill="#E86CD8" stroke="#A23E96" stroke-width=".8"/><path d="M9.5 2L12 0.2L14.2 2.5L11.8 4.3Z" fill="#4C8FE0" stroke="#2A5FA8" stroke-width=".6"/></svg><svg style="left:793px;top:48px" width="16" height="16"><path d="M2 14.5L11 4" stroke="#D83A2A" stroke-width="2.4" stroke-linecap="round"/><path d="M9.5 1.2C11.5 0.2 14.5 1.5 15 4L12.5 3.6L11 5.5L9 3.6Z" fill="#B9C0CC" stroke="#6D7686" stroke-width=".7"/><path d="M13.5 14.5L5.5 5.5" stroke="#8C95A6" stroke-width="1.8" stroke-linecap="round"/><path d="M2.2 2.2L6.8 4L5.6 7L1.5 5Z" fill="#C9CFDA" stroke="#6D7686" stroke-width=".7"/></svg><svg style="left:816px;top:48px" width="16" height="16"><rect x="0.5" y="1.5" width="15" height="13" fill="#EAF0FF" stroke="#2746A8"/><rect x="0.5" y="1.5" width="15" height="2.5" fill="#2C57C8"/><rect x="1" y="4" width="3" height="10" fill="#7CA0E8"/><path d="M3 8H8V5.5L13.5 9.3L8 13V10.6H3Z" fill="#2DB52D" stroke="#157A15" stroke-width=".8"/></svg><svg style="left:837px;top:48px" width="16" height="16"><rect x="1.5" y="2.5" width="9" height="9" fill="#4A7FD8" stroke="#234E9E"/><rect x="3.5" y="4.5" width="5" height="5" fill="#6FB56F"/><path d="M8.5 0.5H13.5V8.5H11V3H8.5Z" fill="#F0C23C" stroke="#9E7A14" stroke-width=".8"/><rect x="10.5" y="9.5" width="4" height="4" fill="#E86CD8" stroke="#A23E96"/><rect x="0" y="14.6" width="16" height="1.4" fill="#7C8698"/></svg><svg style="left:860px;top:48px" width="16" height="16"><rect x="0.5" y="1.5" width="13" height="12" fill="#FDFDFF" stroke="#4B5A80"/><rect x="0.5" y="1.5" width="13" height="2.5" fill="#2C57C8"/><path d="M2.5 6.5L4.5 8L2.5 9.5" stroke="#000" stroke-width="1.3" fill="none"/></svg><svg style="left:37px;top:54px" width="7" height="4"><path d="M0.2 0H6.4L3.3 3.4Z" fill="#7F7A78"/></svg><svg style="left:70px;top:54px" width="7" height="4"><path d="M0.2 0H6.4L3.3 3.4Z" fill="#7F7A78"/></svg><svg style="left:251px;top:55px" width="7" height="4"><path d="M0.2 0H6.4L3.3 3.4Z" fill="#1B1B1B"/></svg><svg style="left:286px;top:55px" width="7" height="4"><path d="M0.2 0H6.4L3.3 3.4Z" fill="#8C8F96"/></svg><svg style="left:319px;top:55px" width="7" height="4"><path d="M0.2 0H6.4L3.3 3.4Z" fill="#1B1B1B"/></svg><svg style="left:880px;top:54px" width="7" height="4"><path d="M0.2 0H6.4L3.3 3.4Z" fill="#1B1B1B"/></svg><div class="r" style="left:148px;top:47px;width:1px;height:18px;background:#8290A8;"></div><div class="r" style="left:149px;top:47px;width:1px;height:18px;background:rgba(255,255,255,.25);"></div><div class="r" style="left:221px;top:47px;width:1px;height:18px;background:#8290A8;"></div><div class="r" style="left:222px;top:47px;width:1px;height:18px;background:rgba(255,255,255,.25);"></div><div class="r" style="left:353px;top:47px;width:1px;height:18px;background:#8290A8;"></div><div class="r" style="left:354px;top:47px;width:1px;height:18px;background:rgba(255,255,255,.25);"></div><div class="r" style="left:478px;top:47px;width:1px;height:18px;background:#8290A8;"></div><div class="r" style="left:479px;top:47px;width:1px;height:18px;background:rgba(255,255,255,.25);"></div><div class="r" style="left:698px;top:47px;width:1px;height:18px;background:#8290A8;"></div><div class="r" style="left:699px;top:47px;width:1px;height:18px;background:rgba(255,255,255,.25);"></div><div class="r" style="left:382px;top:46px;width:90px;height:20px;background:#D5DCE7;border:1px solid #C4CCD9;border-radius:2px"></div><span class="t" style="left:385.4px;top:48.8px;height:16px;line-height:16px;font-size:12px;color:#8C8C8C;letter-spacing:-0.344px;">Debug</span><svg style="left:462px;top:55px" width="7" height="4"><path d="M0.2 0H6.4L3.3 3.4Z" fill="#A9AFBB"/></svg><div class="r" style="left:507px;top:46px;width:185px;height:20px;background:#fff;border:1px solid #8E9BBC;border-radius:2px"></div><svg style="left:683px;top:55px" width="7" height="4"><path d="M0.2 0H6.4L3.3 3.4Z" fill="#1B1B1B"/></svg><svg style="left:892px;top:57px" width="8" height="8"><rect x="0.8" y="0.4" width="6.4" height="1.2" fill="#1b1b1b"/><path d="M0.8 3.6H7.2L4 6.8Z" fill="#1b1b1b"/></svg><div class="r" style="left:903px;top:44px;width:334px;height:24px;border-radius:4px;background:linear-gradient(#C2CCDB,#BAC5D7)"></div><div class="r" style="left:1225px;top:44px;width:12px;height:24px;border-radius:0 4px 4px 0;background:linear-gradient(#D3DBE7,#C6CFDE)"></div><div class="r" style="left:907px;top:49px;width:2px;height:2px;background:#4F6286;"></div><div class="r" style="left:907px;top:53px;width:2px;height:2px;background:#4F6286;"></div><div class="r" style="left:907px;top:57px;width:2px;height:2px;background:#4F6286;"></div><div class="r" style="left:907px;top:61px;width:2px;height:2px;background:#4F6286;"></div><svg style="left:916px;top:48px" width="16" height="16"><path d="M4.8 2.2L11.4 7.5L4.8 12.8Z" fill="#3AA028" stroke="#237A16" stroke-width=".8"/></svg><svg style="left:937px;top:48px" width="16" height="16"><rect x="5" y="4.6" width="2.6" height="7.8" fill="#DADDE3" stroke="#A4A9B4" stroke-width=".7"/><rect x="10" y="4.6" width="2.6" height="7.8" fill="#DADDE3" stroke="#A4A9B4" stroke-width=".7"/></svg><svg style="left:960px;top:48px" width="16" height="16"><rect x="3.4" y="4.8" width="8.4" height="7.6" fill="url(#gS)" stroke="#3A66C4" stroke-width=".8"/></svg><svg style="left:982px;top:48px" width="16" height="16"><rect x="3.2" y="3.2" width="10" height="9.2" fill="#3F7CE6" stroke="#2A5CC0" stroke-width=".7"/><path d="M4.6 7.4L7.8 4.6V6.4H11.2V11.4H9.4V8.4H7.8V10.2Z" fill="#fff"/></svg><svg style="left:1011px;top:48px" width="16" height="16"><path d="M3.2 5.8H8V2.8L13 7.6L8 12.4V9.4H3.2Z" fill="#FFD83A" stroke="#6E5A14" stroke-width=".9"/></svg><svg style="left:1033px;top:48px" width="16" height="16"><path d="M7 3H15M8.5 5.5H15M8.5 7.5H15M8.5 9.5H15M7 11.5H15" stroke="#111" stroke-width="1"/><path d="M7.5 2.6C5.5 0.8 1.6 1.4 1.2 4.4" fill="none" stroke="#2A62D0" stroke-width="1.4"/><path d="M0.6 4.6L6.4 6.8L5 3Z" fill="#2A62D0" transform="translate(1.6,0.6)"/></svg><svg style="left:1055px;top:48px" width="16" height="16"><path d="M6 2.5H15M8 4.5H15M8 6.5H15M8 8.5H15M6 10.5H15" stroke="#111" stroke-width="1"/><path d="M6 1.6C1.6 1.2 1.4 3 1.4 6S1.2 11.6 5 12.6" fill="none" stroke="#2A62D0" stroke-width="1.4"/><path d="M4.4 10.4L8.6 13.2L4.2 15.2Z" fill="#2A62D0"/></svg><svg style="left:1077px;top:48px" width="16" height="16"><path d="M7 7.5H15M7 9.5H15M7 11.5H15M7 13.5H15" stroke="#111" stroke-width="1"/><path d="M1.4 7.6C1 4 4.6 3 7 4" fill="none" stroke="#2A62D0" stroke-width="1.4"/><path d="M5.6 1L9.6 4.2L5.4 6.4Z" fill="#2A62D0"/></svg><svg style="left:1107px;top:48px" width="16" height="16"><circle cx="7" cy="7.5" r="6" fill="#E6E9EE" stroke="#8B919C" stroke-width="1.3"/><path d="M7 3.5V8H10" stroke="#8B919C" stroke-width="1.4" fill="none"/><path d="M9.5 10.5L11 15M13 10.5L15 15M10 13H15" stroke="#747A86" stroke-width="1.3" fill="none"/></svg><svg style="left:1166px;top:48px" width="16" height="16"><path d="M0.5 6C2.5 2.5 4.5 2.5 6.5 6S10.5 9.5 12.5 5" fill="none" stroke="#D83A2A" stroke-width="1.2"/><path d="M0.5 5C2.5 8.5 4.5 8.5 6.5 5S10.5 1.5 12.5 5" fill="none" stroke="#2A62D0" stroke-width="1.2"/><path d="M11.5 7.5V15M8 11.2H15.2" stroke="#222" stroke-width="2.6"/><path d="M11.5 8.5V14M9 11.2H14.2" stroke="#C8CCD4" stroke-width="1"/></svg><svg style="left:1195px;top:48px" width="16" height="16"><rect x="0.5" y="0.5" width="13" height="12" fill="#FDFDFF" stroke="#5A6A90"/><rect x="0.5" y="0.5" width="13" height="2.6" fill="#3A6BD8"/><circle cx="11" cy="11" r="4.6" fill="#D8392B" stroke="#8E1E14" stroke-width=".8"/><circle cx="9.8" cy="9.6" r="1.4" fill="#F28A7E" opacity=".8"/></svg><div class="r" style="left:1004px;top:47px;width:1px;height:18px;background:#8290A8;"></div><div class="r" style="left:1005px;top:47px;width:1px;height:18px;background:rgba(255,255,255,.25);"></div><div class="r" style="left:1099px;top:47px;width:1px;height:18px;background:#8290A8;"></div><div class="r" style="left:1100px;top:47px;width:1px;height:18px;background:rgba(255,255,255,.25);"></div><div class="r" style="left:1128px;top:47px;width:1px;height:18px;background:#8290A8;"></div><div class="r" style="left:1129px;top:47px;width:1px;height:18px;background:rgba(255,255,255,.25);"></div><div class="r" style="left:1188px;top:47px;width:1px;height:18px;background:#8290A8;"></div><div class="r" style="left:1189px;top:47px;width:1px;height:18px;background:rgba(255,255,255,.25);"></div><span class="t" style="left:1134.4px;top:48px;height:16px;line-height:16px;font-size:12px;color:#1B1F4B;letter-spacing:-0.172px;">Hex</span><svg style="left:1216px;top:54px" width="7" height="4"><path d="M0.2 0H6.4L3.3 3.4Z" fill="#1B1B1B"/></svg><svg style="left:1228px;top:57px" width="8" height="8"><rect x="0.8" y="0.4" width="6.4" height="1.2" fill="#1b1b1b"/><path d="M0.8 3.6H7.2L4 6.8Z" fill="#1b1b1b"/></svg><div class="r" style="left:2px;top:69px;width:418px;height:24px;border-radius:4px;background:linear-gradient(#C2CCDB,#BAC5D7)"></div><div class="r" style="left:409px;top:69px;width:11px;height:24px;border-radius:0 4px 4px 0;background:linear-gradient(#D3DBE7,#C6CFDE)"></div><div class="r" style="left:6px;top:74px;width:2px;height:2px;background:#4F6286;"></div><div class="r" style="left:6px;top:78px;width:2px;height:2px;background:#4F6286;"></div><div class="r" style="left:6px;top:82px;width:2px;height:2px;background:#4F6286;"></div><div class="r" style="left:6px;top:86px;width:2px;height:2px;background:#4F6286;"></div><svg style="left:16px;top:73px" width="16" height="16"><rect x="0.5" y="0.5" width="11" height="11" fill="#E6E9EE" stroke="#8B919C"/><rect x="0.5" y="0.5" width="11" height="2" fill="#C6CBD4"/><path d="M2 5H6M2 7H6M2 9H5" stroke="#8B919C"/><rect x="5.5" y="5.5" width="6" height="9" fill="#E6E9EE" stroke="#8B919C"/><path d="M7 8H10M7 10H10M7 12H10" stroke="#C6CBD4"/><path d="M13.5 7V15M11.5 12L13.5 15.2L15.5 12" stroke="#8B919C" fill="none" stroke-width="1.2"/></svg><svg style="left:38px;top:73px" width="16" height="16"><rect x="0.5" y="0.5" width="6" height="3" fill="#E6E9EE" stroke="#8B919C"/><rect x="1.5" y="4.5" width="5" height="4" fill="#C6CBD4" stroke="#8B919C"/><path d="M7.5 1.5L13 7.5H10L11 10.5L9.5 11L8.5 8L7.5 9.5Z" fill="#E6E9EE" stroke="#8B919C" stroke-width=".8"/><rect x="8.5" y="11.5" width="7" height="4" fill="#E6E9EE" stroke="#8B919C"/></svg><svg style="left:60px;top:73px" width="16" height="16"><path d="M1.5 0.5L7.5 7H4.8L6.2 10.5L4.8 11L3.4 7.6L1.5 9.5Z" fill="#F4F5F8" stroke="#4A4E58" stroke-width=".9"/><rect x="4.5" y="11.5" width="11" height="3.6" fill="#E6E9EE" stroke="#8B919C"/><path d="M6 13.3H9M10.5 13.3H14" stroke="#8B919C"/></svg><svg style="left:82px;top:73px" width="16" height="16"><text x="0" y="13" font-family="Liberation Serif" font-size="14" fill="#8B919C" font-weight="700">A</text><path d="M9.5 8H15M12.8 5.6L15.2 8L12.8 10.4" stroke="#8B919C" stroke-width="1.2" fill="none"/><path d="M9 13.5H10.5M11.5 13.5H13M14 13.5H15.5" stroke="#8B919C" stroke-width="1.3"/></svg><svg style="left:104px;top:73px" width="16" height="16"><path d="M3.5 3V1.5M1.5 4.5H5.5M1.5 4.5V12.5H5" stroke="#8B919C" fill="none"/><rect x="6.5" y="0.5" width="9" height="15" fill="#F2F4F7" stroke="#8B919C"/><path d="M8 3H12" stroke="#4A4E58" stroke-width="1.2"/><path d="M9 6.5H14.5M9 9H14.5M9 11.5H14.5M9 14H14.5" stroke="#3A3E48" stroke-width="1.4"/></svg><svg style="left:133px;top:73px" width="16" height="16"><path d="M2 3H15M7 5.8H15M7 8.6H12M2 11.4H15M2 14.2H8" stroke="#45494F" stroke-width="1.5" stroke-dasharray="4 1"/><path d="M7.5 0.5V16" stroke="#45494F" stroke-width="1" stroke-dasharray="1 1.6"/><path d="M6 7.2H1M3.4 4.8L0.8 7.2L3.4 9.6" stroke="#9EA4AE" stroke-width="1.5" fill="none"/></svg><svg style="left:155px;top:73px" width="16" height="16"><path d="M2 3H15M7 5.8H15M7 8.6H12M2 11.4H15M2 14.2H8" stroke="#45494F" stroke-width="1.5" stroke-dasharray="4 1"/><path d="M7.5 0.5V16" stroke="#45494F" stroke-width="1" stroke-dasharray="1 1.6"/><path d="M0.5 7.2H5.5M3.2 4.8L5.8 7.2L3.2 9.6" stroke="#9EA4AE" stroke-width="1.5" fill="none"/></svg><svg style="left:184px;top:73px" width="16" height="16"><path d="M1 2H3M4.5 2H15" stroke="#45494F" stroke-width="1.5"/><path d="M5 5.3H15M5 8.6H15" stroke="#D5D9E0" stroke-width="1.2"/><path d="M7 11.5H15" stroke="#45494F" stroke-width="1.5"/><path d="M3 14.6H15" stroke="#45494F" stroke-width="1.5"/></svg><svg style="left:206px;top:73px" width="16" height="16"><path d="M5 4.5C8 0.8 12.8 2.6 12 6.6" fill="none" stroke="#45494F" stroke-width="1.4"/><path d="M2 1.2L6.4 2.4L3 6Z" fill="#45494F"/><path d="M6 9H15" stroke="#D5D9E0" stroke-width="1.2"/><path d="M7 11.7H15" stroke="#45494F" stroke-width="1.5"/><path d="M3 14.8H15" stroke="#45494F" stroke-width="1.5"/></svg><svg style="left:235px;top:73px" width="16" height="16"><rect x="0.5" y="2.5" width="15" height="11" rx="1.5" fill="url(#gG)" stroke="#8B919C"/></svg><svg style="left:257px;top:73px" width="16" height="16"><rect x="3.5" y="1.5" width="12" height="8" rx="1.5" fill="url(#gG)" stroke="#8B919C"/><path d="M0.5 11.5L4.5 8V10H9V13H4.5V15Z" fill="#B2B8C2" stroke="#8B919C" stroke-width=".8"/></svg><svg style="left:279px;top:73px" width="16" height="16"><rect x="0.5" y="1.5" width="12" height="8" rx="1.5" fill="url(#gG)" stroke="#8B919C"/><path d="M15.5 11.5L11.5 8V10H7V13H11.5V15Z" fill="#B2B8C2" stroke="#8B919C" stroke-width=".8"/></svg><svg style="left:301px;top:73px" width="16" height="16"><path d="M4.5 4.5V2.5H8.5L9.5 4.5H15.5V11.5H4.5Z" fill="#E6E9EE" stroke="#8B919C"/><path d="M0.5 11.5L4.5 8V10H9V13H4.5V15Z" fill="#B2B8C2" stroke="#8B919C" stroke-width=".8"/></svg><svg style="left:323px;top:73px" width="16" height="16"><path d="M0.5 4.5V2.5H4.5L5.5 4.5H11.5V11.5H0.5Z" fill="#E6E9EE" stroke="#8B919C"/><path d="M15.5 11.5L11.5 8V10H7V13H11.5V15Z" fill="#B2B8C2" stroke="#8B919C" stroke-width=".8"/></svg><svg style="left:345px;top:73px" width="16" height="16"><path d="M6.5 0.5H11.5L14.5 3V10.5H6.5Z" fill="#E6E9EE" stroke="#8B919C"/><path d="M8 4.5H13M8 6.5H13M8 8.5H13" stroke="#8B919C"/><path d="M0.5 11.5L4.5 8V10H9V13H4.5V15Z" fill="#B2B8C2" stroke="#8B919C" stroke-width=".8"/><rect x="6.5" y="12.5" width="7" height="3" rx="1" fill="#E6E9EE" stroke="#8B919C"/></svg><svg style="left:367px;top:73px" width="16" height="16"><path d="M1.5 0.5H6.5L9.5 3V10.5H1.5Z" fill="#E6E9EE" stroke="#8B919C"/><path d="M3 4.5H8M3 6.5H8M3 8.5H8" stroke="#8B919C"/><path d="M15.5 11.5L11.5 8V10H7V13H11.5V15Z" fill="#B2B8C2" stroke="#8B919C" stroke-width=".8"/><rect x="1.5" y="12.5" width="7" height="3" rx="1" fill="#E6E9EE" stroke="#8B919C"/></svg><svg style="left:389px;top:73px" width="16" height="16"><rect x="0.5" y="0.5" width="13" height="9" rx="1.5" fill="url(#gG)" stroke="#8B919C"/><path d="M3 11L5 9.5" stroke="#8B919C"/><path d="M7 7L14.5 15M14 7L8 15" stroke="#8B919C" stroke-width="1.8"/><rect x="14.5" y="14" width="1.2" height="1.2" fill="#D83A2A"/></svg><div class="r" style="left:126px;top:72px;width:1px;height:18px;background:#8290A8;"></div><div class="r" style="left:127px;top:72px;width:1px;height:18px;background:rgba(255,255,255,.25);"></div><div class="r" style="left:177px;top:72px;width:1px;height:18px;background:#8290A8;"></div><div class="r" style="left:178px;top:72px;width:1px;height:18px;background:rgba(255,255,255,.25);"></div><div class="r" style="left:228px;top:72px;width:1px;height:18px;background:#8290A8;"></div><div class="r" style="left:229px;top:72px;width:1px;height:18px;background:rgba(255,255,255,.25);"></div><svg style="left:411px;top:82px" width="8" height="8"><rect x="0.8" y="0.4" width="6.4" height="1.2" fill="#1b1b1b"/><path d="M0.8 3.6H7.2L4 6.8Z" fill="#1b1b1b"/></svg><div class="r" style="left:138px;top:772px;width:882px;height:1px;background:#141D10;"></div><svg style="left:16px;top:772px" width="17" height="16"><path d="M0 2.2L6.8 1.3V7.5H0ZM7.8 1.1L16.5 0V7.5H7.8ZM0 8.5H6.8V14.7L0 13.8ZM7.8 8.5H16.5V16L7.8 14.9Z" fill="#fff"/></svg><svg style="left:52px;top:765px" width="12" height="16"><path d="M1 1L10.5 8L1 15Z" fill="none" stroke="#2E2E2E" stroke-width="1.4"/></svg><span class="t" style="left:93.4px;top:764.5px;height:16px;line-height:16px;font-size:12px;color:#2C2C2C;font-weight:700;letter-spacing:0.323px;">22:1</span><svg style="left:62px;top:773px" width="21" height="14"><rect x="4.5" y="0.8" width="12" height="12" fill="#000" stroke="#fff" stroke-width="1.5"/><path d="M2.5 2.5H0.8V11.5H2.5M18.5 2.5H20.2V11.5H18.5" stroke="#fff" stroke-width="1.3" fill="none"/></svg><svg style="left:112px;top:768px" width="21" height="22"><path d="M1 10.5C1.5 4.5 5.8 1 10.8 1C16.5 1 20 5 20 11V12.8H7.2C7.4 16 10 17.6 13.2 17.6C15.6 17.6 17.6 16.9 19.2 15.9V19.8C17.4 20.8 15.2 21.4 12.4 21.4C6.4 21.4 2.6 17.6 2.6 12.4C2.6 9.2 4.2 6.6 6.8 5.2C5.2 6.4 4.3 8 4 9.2C3 9.4 1.6 9.9 1 10.5ZM7.4 9.4H14.6C14.5 6.8 13.2 5.2 11 5.2C9 5.2 7.7 6.8 7.4 9.4Z" fill="#0C7CDA"/></svg><svg style="left:160px;top:770.5px" width="22" height="19" viewBox="0 0 22 18" preserveAspectRatio="none"><path d="M0.5 2H8L9.5 3.5H21.5V17.5H0.5Z" fill="#F5C84B"/><rect x="0.5" y="5" width="21" height="12.5" fill="#FBDD7C"/><rect x="2" y="2.6" width="5.5" height="1.2" fill="#E2A918"/><path d="M5.5 17.5V11H16.5V17.5H13.5V13.5H8.5V17.5Z" fill="#2C9CEB"/><rect x="0.5" y="9.5" width="21" height="1.2" fill="#E9BD3E" opacity=".6"/></svg><svg style="left:209px;top:768px" width="22" height="24"><path d="M7 6C7 1.5 15 1.5 15 6" fill="none" stroke="#fff" stroke-width="1.4"/><path d="M0.5 7.5L21.5 5.5V22.5L0.5 20Z" fill="#fff"/><path d="M5 10.3L10 9.8V13.5H5ZM11.5 9.7L17 9.2V13.5H11.5ZM5 15H10V18.8L5 18.3ZM11.5 15H17V19.5L11.5 18.9Z" fill="#000"/></svg><svg style="left:257px;top:768px" width="25" height="24"><circle cx="12" cy="12.5" r="11.5" fill="#5DB04A"/><path d="M12 12.5L13 1A11.5 11.5 0 0 1 23.3 10.2Z" fill="#F2F2F2"/><circle cx="11.5" cy="13" r="6" fill="#fff"/><circle cx="11.5" cy="13" r="3.2" fill="#5DB04A"/><path d="M14.2 8.6L15.4 2.6L17.4 3.2L15.8 9.2Z" fill="#F07A1E"/><path d="M16.8 10.4L20.6 5.6L22 7L18 11.4Z" fill="#F07A1E"/><path d="M11.5 13L16 1L25 8Z" fill="none"/></svg><div class="r" style="left:294px;top:760px;width:48px;height:37px;background:#363636;"></div><svg style="left:305px;top:773px" width="25" height="14"><path d="M12.5 7.4C9.6 3.4 7.4 2.6 5.6 2.8C3.2 3 1.8 5 2 7.4S4 11.4 6.2 11.2C8 11 10 10 12.5 7.4Z" fill="none" stroke="#2F8AE2" stroke-width="3"/><path d="M12.5 7.4C15 10.6 17.4 11.4 19.4 11C21.8 10.6 23.2 8.6 23 6.2S21 2.4 18.8 2.6C16.8 2.8 14.8 4 12.5 7.4Z" fill="none" stroke="#6A3CC0" stroke-width="3"/><path d="M4 6C4.6 4.6 6 4 7.4 4.6" stroke="#8CC4F6" stroke-width="1.2" fill="none"/><path d="M16 4.6C17.4 3.6 19.4 3.4 20.6 4.6" stroke="#A884E4" stroke-width="1.2" fill="none"/></svg><svg style="left:355px;top:768px" width="25" height="25"><rect x="1.5" y="2.5" width="17" height="16" fill="none" stroke="#3FB53F" stroke-width="1.6" stroke-dasharray="2 2"/><rect x="0" y="0" width="8" height="10" fill="#000"/><ellipse cx="4" cy="2.4" rx="3.6" ry="1.8" fill="#FFE070"/><path d="M0.4 2.4V8.4C0.4 10.8 7.6 10.8 7.6 8.4V2.4C7.6 4.8 0.4 4.8 0.4 2.4Z" fill="#E8B020"/><path d="M9 11L21 23.5" stroke="#A9B4C4" stroke-width="2.6" stroke-linecap="round"/><path d="M19 10L9.5 22.5" stroke="#C9A35A" stroke-width="2.4" stroke-linecap="round"/><path d="M15.5 8.5C17 6.8 21 7.2 23 10L19.6 11.2Z" fill="#DDE2EA"/><path d="M7.5 10.5L12 9.6L10 13.5Z" fill="#DDE2EA"/></svg><svg style="left:405px;top:769px" width="22" height="22"><rect x="0.5" y="0.5" width="21" height="21" fill="#111" stroke="#9A9A9A"/><rect x="9" y="1.5" width="11.5" height="11" fill="#F5A800"/><rect x="10" y="2.2" width="9.5" height="3" fill="#FFCB4D" opacity=".8"/><rect x="1.5" y="6.5" width="6.5" height="8" fill="#D93025"/><rect x="2.2" y="7" width="5" height="2.5" fill="#F06A60" opacity=".8"/><rect x="9" y="13.5" width="11.5" height="7" fill="#3C8CF0"/><rect x="1.5" y="15.5" width="6.5" height="5" fill="#111" stroke="#ddd" stroke-width=".8"/></svg><div class="r" style="left:249px;top:798px;width:40px;height:2px;background:#F08C9B;"></div><div class="r" style="left:294px;top:798px;width:48px;height:2px;background:#F08C9B;"></div><div class="r" style="left:347px;top:798px;width:40px;height:2px;background:#F08C9B;"></div><div class="r" style="left:396px;top:798px;width:40px;height:2px;background:#F08C9B;"></div><svg style="left:1015px;top:767px" width="12" height="12"><circle cx="6" cy="6" r="4.6" fill="#262626"/></svg><div class="r" style="left:1026px;top:772px;width:45px;height:1px;background:#1A1A1A;"></div><span class="t" style="left:1094.4px;top:764.5px;height:16px;line-height:16px;font-size:12px;color:#181818;font-weight:700;letter-spacing:0px;font-size:10.55px;">22:42</span><svg style="left:1047px;top:775px" width="11" height="7"><path d="M0.8 6L5.5 1.2L10.2 6" stroke="#fff" stroke-width="1.3" fill="none"/></svg><svg style="left:1067px;top:773px" width="18" height="12"><rect x="5.5" y="2.5" width="11" height="7" fill="none" stroke="#fff" stroke-width="1.1"/><rect x="16.8" y="4.5" width="1.2" height="3" fill="#fff"/><path d="M0.5 4.5H3V1.5M3 4.5V9.5M3 7.5H0.5M3 6H5.5" stroke="#fff" stroke-width="1.1" fill="none"/></svg><svg style="left:1092px;top:772px" width="17" height="15"><rect x="4.5" y="1.5" width="11" height="8" fill="none" stroke="#fff" stroke-width="1.1"/><path d="M10 9.5V12.5M6.5 12.8H13.5" stroke="#fff" stroke-width="1.1"/><rect x="0.5" y="0.5" width="3" height="8" fill="#000" stroke="#fff" stroke-width="1"/><path d="M2 8.5V12.5H6" stroke="#fff" fill="none"/></svg><svg style="left:1115px;top:772px" width="17" height="14"><path d="M0.8 4.8H3.4L7 1.5V12.5L3.4 9.2H0.8Z" fill="none" stroke="#fff" stroke-width="1.1"/><path d="M9 4.5C10.2 6 10.2 8 9 9.5M11 2.8C13 5.2 13 8.8 11 11.2" stroke="#fff" stroke-width="1.1" fill="none"/><path d="M13.2 1.4C15.8 4.6 15.8 9.4 13.2 12.6" stroke="#777" stroke-width="1" fill="none"/></svg><svg style="left:1141px;top:771px" width="15" height="17"><path d="M0.5 0.5H14.5V12.5H10L7.5 16L5 12.5H0.5Z" fill="#fff"/><path d="M3 4H12M3 6.5H12M3 9H12" stroke="#000" stroke-width="1.1"/></svg><span class="t" style="left:1165.9px;top:771.5px;height:16px;line-height:16px;font-size:12px;color:#fff;letter-spacing:0px;font-size:10.7px;">ENG</span><span class="t" style="left:1221.9px;top:763px;height:16px;line-height:16px;font-size:12px;color:#fff;letter-spacing:-0.508px;">19:57</span><span class="t" style="left:1205.4px;top:779.6px;height:16px;line-height:16px;font-size:12px;color:#fff;letter-spacing:-0.052px;">29/11/2016</span><div class="r" style="left:1275px;top:760px;width:1px;height:40px;background:#4A4A4A;"></div><svg style="left:2px;top:7.5px" width="16" height="9"><path d="M8 4.2C6 1.6 4.8 1 3.6 1C2 1 1 2.4 1 4.2S2 7.4 3.6 7.4C4.8 7.4 6 6.8 8 4.2Z" fill="none" stroke="#1B5A94" stroke-width="2.5"/><path d="M8 4.2C10 6.8 11.2 7.4 12.4 7.4C14 7.4 15 6 15 4.2S14 1 12.4 1C11.2 1 10 1.6 8 4.2Z" fill="none" stroke="#4E22A0" stroke-width="2.5"/></svg><svg style="left:1159px;top:10px" width="11" height="2"><rect width="10" height="1" fill="#8A8A8A"/></svg><svg style="left:1203px;top:4px" width="12" height="12"><path d="M3.5 2.5V0.5H11.5V8.5H9.5" fill="none" stroke="#8A8A8A"/><rect x="1.5" y="2.5" width="8" height="8" fill="#fff" stroke="#8A8A8A"/></svg><svg style="left:1250px;top:5px" width="11" height="11"><path d="M0.5 0.5L10.5 10.5M10.5 0.5L0.5 10.5" stroke="#8A8A8A" stroke-width="1"/></svg><div class="r" style="left:1002px;top:122px;width:22px;height:22px;background:#FFEFBB;border:1px solid #E5C365;border-radius:2px"></div><svg style="left:1005px;top:125px" width="16" height="16"><path d="M6 1.5H14M6 5.5H14M6 9.5H14M6 13.5H14" stroke="#44587E" stroke-width="1"/><rect x="1.5" y="0.5" width="2" height="2" fill="#fff" stroke="#2A3E6E" stroke-width="1"/><rect x="1.5" y="4.5" width="2" height="2" fill="#fff" stroke="#2A3E6E" stroke-width="1"/><rect x="1.5" y="8.5" width="2" height="2" fill="#fff" stroke="#2A3E6E" stroke-width="1"/><rect x="1.5" y="12.5" width="2" height="2" fill="#fff" stroke="#2A3E6E" stroke-width="1"/></svg><svg style="left:1027px;top:125px" width="16" height="16"><rect x="3.5" y="0.5" width="7" height="6" fill="#EEF2FA" stroke="#5C6C90"/><rect x="6.5" y="3.5" width="7" height="6" fill="#EEF2FA" stroke="#5C6C90"/><rect x="9.5" y="6.5" width="6.5" height="6" fill="#F6F8FD" stroke="#5C6C90"/><path d="M3.2 5.5C0.8 7 0.8 10 2.4 11.6L1 13L6.4 14.6L5.6 9.2L4.2 10.4C3.2 9 3.4 7.4 4.4 6.6Z" fill="#E8842A" stroke="#B85E12" stroke-width=".6"/></svg><div class="r" style="left:1049px;top:124px;width:1px;height:18px;background:#8290A8;"></div><div class="r" style="left:1050px;top:124px;width:1px;height:18px;background:rgba(255,255,255,.25);"></div><svg style="left:1056px;top:125px" width="16" height="16"><rect x="1.5" y="1.5" width="13" height="13" fill="#FBFBF4" stroke="#8C8C80"/><rect x="1.5" y="1.5" width="3" height="13" fill="#E4E0C8"/><path d="M3.5 3.5L5.5 5.6L8.6 1.2" stroke="#D82020" stroke-width="1.4" fill="none"/><path d="M7.5 6.5H13M7.5 9.5H13M7.5 12.5H13" stroke="#2A56D8" stroke-width="1.3"/><path d="M5 9.5H6.5M5 12.5H6.5" stroke="#8C8C80" stroke-width="1.2"/></svg><svg style="left:1078px;top:125px" width="16" height="16"><circle cx="7" cy="7.5" r="6.2" fill="#E6E9EE" stroke="#8B919C" stroke-width="1.2"/><path d="M7 3.5V8H10.5" stroke="#8B919C" stroke-width="1.4" fill="none"/><path d="M9.5 7.5L15.8 11L9.5 15.5Z" fill="#C6CBD4" stroke="#8B919C" stroke-width=".8"/></svg><svg style="left:1100px;top:125px" width="16" height="16"><rect x="2.5" y="1.5" width="9" height="11" rx="1.5" fill="#E6E9EE" stroke="#8B919C"/><path d="M1 4H4M1 7H4M1 10H4M5 5H10M5 8H9" stroke="#8B919C"/><circle cx="11" cy="11" r="4.4" fill="#E6E9EE" stroke="#8B919C" stroke-width="1.1"/><path d="M11 8.5V11.2H13.4" stroke="#8B919C" stroke-width="1.1" fill="none"/></svg><svg style="left:978px;top:150px" width="11" height="13"><path d="M0.5 5.5H10.5M0.5 7.5H10.5M5.5 0.8V5M5.5 8V12.2" stroke="#000" stroke-width="1"/><path d="M3 3L5.5 0.4L8 3ZM3 10L5.5 12.6L8 10Z" fill="#000"/></svg><svg style="left:979px;top:170px" width="9" height="6"><path d="M0.5 5L4.5 1L8.5 5" stroke="#B4B4B4" stroke-width="1.2" fill="none"/></svg><svg style="left:979px;top:492px" width="9" height="6"><path d="M0.5 1L4.5 5L8.5 1" stroke="#9A9A9A" stroke-width="1.2" fill="none"/></svg><svg style="left:71px;top:508px" width="6" height="9"><path d="M5 0.5L1 4.5L5 8.5" stroke="#9A9A9A" stroke-width="1.2" fill="none"/></svg><svg style="left:963px;top:508px" width="6" height="9"><path d="M1 0.5L5 4.5L1 8.5" stroke="#9A9A9A" stroke-width="1.2" fill="none"/></svg><svg style="left:1005px;top:196px" width="17" height="17"><circle cx="8" cy="8" r="7.2" fill="#F4F4F4" stroke="#AA5C5C" stroke-width="1.3"/><rect x="4.8" y="4.8" width="6.4" height="6.4" fill="#E2525E"/><rect x="5.4" y="5.4" width="5.2" height="2.4" fill="#EE8088" opacity=".7"/></svg><svg style="left:1005px;top:219px" width="17" height="17"><path d="M6.5 1.5L14 1L8.8 6.2L12 6L3.4 14.2L6.4 8.4L3.6 8.6Z" fill="#FFD040" stroke="#C8862A" stroke-width=".7" stroke-linejoin="round"/><path d="M7 2.4L12 2L7.5 6.6" fill="none" stroke="#FFF0A0" stroke-width=".8"/></svg><svg style="left:1005px;top:242px" width="17" height="17"><path d="M6.5 1.5L14 1L8.8 6.2L12 6L3.4 14.2L6.4 8.4L3.6 8.6Z" fill="#FFD040" stroke="#C8862A" stroke-width=".7" stroke-linejoin="round"/><path d="M7 2.4L12 2L7.5 6.6" fill="none" stroke="#FFF0A0" stroke-width=".8"/></svg><svg style="left:1005px;top:265px" width="17" height="17"><path d="M1 4.5H6M2 6.5H6M3 8.5H6" stroke="#D8D4A0" stroke-width="1"/><rect x="7.5" y="4.5" width="8" height="8" fill="#fff" stroke="#3E4A6E" stroke-width=".9"/><path d="M9 7H12.5M9 9H14M9 11H13" stroke="#4E5A7E" stroke-width=".8"/></svg><svg style="left:1005px;top:288px" width="17" height="17"><path d="M1 4.5H6M2 6.5H6M3 8.5H6" stroke="#D8D4A0" stroke-width="1"/><rect x="7.5" y="4.5" width="8" height="8" fill="#fff" stroke="#3E4A6E" stroke-width=".9"/><path d="M9 7H12.5M9 9H14M9 11H13" stroke="#4E5A7E" stroke-width=".8"/></svg><svg style="left:1005px;top:311px" width="17" height="17"><path d="M1 4.5H6M2 6.5H6M3 8.5H6" stroke="#D8D4A0" stroke-width="1"/><rect x="7.5" y="4.5" width="8" height="8" fill="#fff" stroke="#3E4A6E" stroke-width=".9"/><path d="M9 7H12.5M9 9H14M9 11H13" stroke="#4E5A7E" stroke-width=".8"/></svg><svg style="left:1005px;top:334px" width="17" height="17"><path d="M1 4.5H6M2 6.5H6M3 8.5H6" stroke="#D8D4A0" stroke-width="1"/><rect x="7.5" y="4.5" width="8" height="8" fill="#fff" stroke="#3E4A6E" stroke-width=".9"/><path d="M9 7H12.5M9 9H14M9 11H13" stroke="#4E5A7E" stroke-width=".8"/></svg><svg style="left:1005px;top:357px" width="17" height="17"><path d="M1 4.5H6M2 6.5H6M3 8.5H6" stroke="#D8D4A0" stroke-width="1"/><rect x="7.5" y="4.5" width="8" height="8" fill="#fff" stroke="#3E4A6E" stroke-width=".9"/><path d="M9 7H12.5M9 9H14M9 11H13" stroke="#4E5A7E" stroke-width=".8"/></svg><svg style="left:1005px;top:380px" width="17" height="17"><path d="M1 4.5H6M2 6.5H6M3 8.5H6" stroke="#D8D4A0" stroke-width="1"/><rect x="7.5" y="4.5" width="8" height="8" fill="#fff" stroke="#3E4A6E" stroke-width=".9"/><path d="M9 7H12.5M9 9H14M9 11H13" stroke="#4E5A7E" stroke-width=".8"/></svg><svg style="left:1005px;top:403px" width="17" height="17"><path d="M1 4.5H6M2 6.5H6M3 8.5H6" stroke="#D8D4A0" stroke-width="1"/><rect x="7.5" y="4.5" width="8" height="8" fill="#fff" stroke="#3E4A6E" stroke-width=".9"/><path d="M9 7H12.5M9 9H14M9 11H13" stroke="#4E5A7E" stroke-width=".8"/></svg><svg style="left:1005px;top:426px" width="17" height="17"><circle cx="8" cy="8" r="7.2" fill="#F4F4F4" stroke="#AA5C5C" stroke-width="1.3"/><rect x="4.8" y="4.8" width="6.4" height="6.4" fill="#E2525E"/><rect x="5.4" y="5.4" width="5.2" height="2.4" fill="#EE8088" opacity=".7"/></svg><svg style="left:1005px;top:449px" width="17" height="17"><circle cx="7" cy="8" r="6.6" fill="#E4E8F8" stroke="#7C7CC8" stroke-width="1.2"/><path d="M7 3.5V8.5H4" stroke="#5A5AA8" stroke-width="1.1" fill="none"/><path d="M9.5 5L16 10.8L9.5 16.5Z" fill="#FFE020" stroke="#B89A10" stroke-width=".7"/></svg><svg style="left:11px;top:714px" width="16" height="16"><rect x="1.5" y="0.5" width="13" height="12" fill="#F4F6FC" stroke="#8A96B4"/><rect x="1.5" y="0.5" width="13" height="3" fill="#4A7CE0" stroke="#3A62B8" stroke-width=".6"/><path d="M4 5.5H7M8 5.5H11M4 7.5H7M8 7.5H10M8 9.5H11" stroke="#3A68D8" stroke-width="1.1"/><path d="M2.5 8.5L5 11L2.5 13.5L0 11Z" fill="#3A78E0"/><path d="M5.5 11L8 13.2L5.5 15.6L3 13.2Z" fill="#E060D8"/><path d="M9.5 9L12 11L9.5 13.2L7 11Z" fill="#F0A020"/></svg><svg style="left:75px;top:714px" width="16" height="16"><rect x="2.5" y="0.5" width="12" height="11" fill="#F4F6FC" stroke="#8A96B4"/><rect x="2.5" y="0.5" width="12" height="3" fill="#4A7CE0" stroke="#3A62B8" stroke-width=".6"/><path d="M5 5.5H8M9 5.5H12M5 7.5H8M9 7.5H11" stroke="#3A68D8" stroke-width="1.1"/><path d="M3 10L1 14.5M11 10L13 14.5M4 12.5H10" stroke="#222" stroke-width="1.3" fill="none"/><rect x="0.5" y="13" width="5" height="3" fill="#DDE" stroke="#222" stroke-width=".8"/><rect x="8.5" y="13" width="5" height="3" fill="#DDE" stroke="#222" stroke-width=".8"/></svg><svg style="left:503px;top:713px" width="17" height="17"><rect x="3.5" y="1.5" width="7" height="6" fill="#EEF2FA" stroke="#5C6C90"/><rect x="6" y="4.5" width="7" height="6" fill="#EEF2FA" stroke="#5C6C90"/><rect x="8.5" y="7.5" width="7.5" height="6" fill="#F6F8FD" stroke="#5C6C90"/><path d="M3.4 7C1 8.4 1 11 2.4 12.6L1 14L6 15.6L5.4 10.6L4 11.8C3.2 10.6 3.4 9 4.4 8.2Z" fill="#3A7CE4" stroke="#1E54B0" stroke-width=".6"/></svg><svg style="left:584px;top:714.5px" width="16" height="16"><rect x="3.5" y="1.5" width="12" height="11" fill="#F4F6FC" stroke="#8A96B4"/><rect x="3.5" y="1.5" width="12" height="3" fill="#4A7CE0" stroke="#3A62B8" stroke-width=".6"/><path d="M6 6.5H9M10 6.5H13M6 8.5H10M6 10.5H8" stroke="#7C86A0" stroke-width="1"/><path d="M1.6 4.5V10.5" stroke="#E02020" stroke-width="2.2" stroke-linecap="round"/><circle cx="1.6" cy="13.6" r="1.2" fill="#E02020"/></svg>
</body></html>
